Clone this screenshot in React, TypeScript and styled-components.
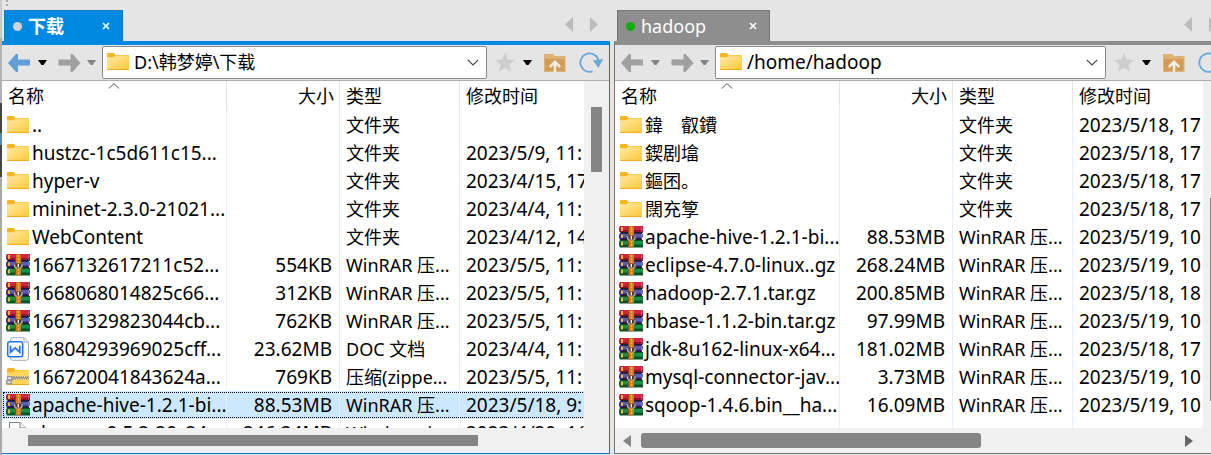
import React from "react";
import styled, { createGlobalStyle } from "styled-components";

const FONT = '"Noto Sans", "Noto Sans CJK SC", sans-serif';

const GlobalStyle = createGlobalStyle`
  *, *::before, *::after { box-sizing: border-box; }
  body { margin: 0; background: #e5e5e5; overflow: hidden; }
  button, input, table { font: inherit; color: inherit; }
  svg { display: block; flex: none; }
`;

const Workspace = styled.main`
  display: grid;
  grid-template-columns: minmax(0, 608fr) minmax(0, 615fr);
  gap: 4px;
  height: 100vh;
  margin-right: -18px;
  padding-bottom: 1px;
  border-left: 2px solid;
  border-image: linear-gradient(
      #c9c9c9 0 40px, #b2b2b2 40px 104px, #454545 104px 134px, #5f86b5 134px 146px,
      #454545 146px 177px, #a9a9a9 177px 100%) 2;
  font: 18px/28px ${FONT};
  color: #000;
`;

const Pane = styled.section`
  display: flex;
  flex-direction: column;
  min-height: 0;
`;

const TabBar = styled.div<{ $grip: boolean }>`
  display: flex;
  align-items: flex-end;
  height: 41px;
  flex: none;
  padding: 0 12px 0 ${(p) => (p.$grip ? 2 : 3)}px;
  background: ${(p) =>
    p.$grip
      ? "linear-gradient(#a8a8a8, #a8a8a8) 4px 0 / 2px 2px no-repeat, linear-gradient(#a8a8a8, #a8a8a8) 4px 4px / 2px 2px no-repeat"
      : "none"};
`;

const Tab = styled.div<{ $fill: string; $edge: string; $wide: boolean }>`
  display: flex;
  align-items: center;
  width: ${(p) => (p.$wide ? 153 : 119)}px;
  height: 31px;
  padding: 0 12px 0 8px;
  background: ${(p) => p.$fill};
  border: 1px solid ${(p) => p.$edge};
  border-bottom: 0;
  color: #fff;
`;

const TabLabel = styled.button<{ $bold: boolean }>`
  display: flex;
  align-items: center;
  gap: 6px;
  flex: 1;
  height: 100%;
  padding: 0;
  border: 0;
  background: none;
  font-weight: ${(p) => (p.$bold ? 700 : 400)};
  line-height: 28px;
`;

const StatusDot = styled.span<{ $color: string }>`
  width: 9px;
  height: 9px;
  border-radius: 50%;
  background: ${(p) => p.$color};
`;

const PlainButton = styled.button`
  display: flex;
  align-items: center;
  justify-content: center;
  flex: none;
  padding: 0;
  border: 0;
  background: none;
`;

const TabScroller = styled.div`
  display: flex;
  gap: 17px;
  margin: 0 0 9px auto;
`;

const Body = styled.div<{ $accent: string; $leftEdge: boolean; $edge: string }>`
  display: flex;
  flex-direction: column;
  flex: 1;
  min-height: 0;
  border: 1px solid ${(p) => p.$edge};
  border-top: 4px solid ${(p) => p.$accent};
  border-left-width: ${(p) => (p.$leftEdge ? 1 : 0)}px;
`;

const Toolbar = styled.div`
  display: flex;
  align-items: center;
  height: 36px;
  flex: none;
  padding: 0 6px;
  border-bottom: 1px solid #adadad;
`;

const ToolGroup = styled.div<{ $gap: number; $after: number }>`
  display: flex;
  align-items: center;
  gap: ${(p) => p.$gap}px;
  margin-right: ${(p) => p.$after}px;
`;

const PathBox = styled.label`
  display: flex;
  align-items: center;
  flex: 1;
  min-width: 0;
  height: 33px;
  margin-right: 8px;
  padding: 0 7px 1px 3px;
  gap: 4px;
  background: #fff;
  border: 1px solid #8a8a8a;
  border-radius: 2px;
`;

const PathInput = styled.input<{ $large: boolean }>`
  flex: 1;
  min-width: 0;
  height: 28px;
  padding: 0;
  border: 0;
  outline: 0;
  background: none;
  font-size: ${(p) => (p.$large ? 19 : 18)}px;
`;

const ListArea = styled.div`
  display: flex;
  flex: 1;
  min-height: 0;
  background: #f0f0f0;
`;

const ListView = styled.div`
  flex: 1;
  min-width: 0;
  overflow: hidden;
  background: #fff;
  border-bottom-right-radius: 3px;
`;

const FileTable = styled.table`
  width: 660px;
  height: 100%;
  table-layout: fixed;
  border-collapse: separate;
  border-spacing: 0;
  white-space: nowrap;
`;

const HeadCell = styled.th<{ $align?: string }>`
  position: relative;
  height: 30px;
  padding: 1px 5px 1px 6px;
  border-right: 1px solid #e5e5e5;
  font-weight: 400;
  text-align: ${(p) => p.$align || "left"};
`;

const SortMark = styled.svg`
  position: absolute;
  top: 2px;
  left: 50%;
  margin-left: -6px;
`;

const Row = styled.tr<{ $selected?: boolean }>`
  height: 28px;
  background: ${(p) => (p.$selected ? "#cce8ff" : "transparent")};
  outline: ${(p) => (p.$selected ? "1px dotted #000" : "none")};
  outline-offset: -2px;
`;

const Cell = styled.td<{ $align?: string; $large?: boolean }>`
  height: 28px;
  padding: 0 7px 0 6px;
  border-right: 1px solid #e6f1fc;
  overflow: hidden;
  font-size: ${(p) => (p.$large ? 19 : 18)}px;
  text-align: ${(p) => p.$align || "left"};
`;

const NameCell = styled(Cell)`
  padding: 0 0 0 4px;
`;

const FillerCell = styled(Cell)`
  height: auto;
`;

const FileName = styled.span`
  display: flex;
  align-items: center;
  gap: 2px;
  height: 28px;
`;

const VTrack = styled.div`
  width: 25px;
  flex: none;
  padding-left: 7px;
  background: #f0f0f0;
`;

const VThumb = styled.div<{ $top: number; $size: number }>`
  width: 11px;
  height: ${(p) => p.$size}px;
  transform: translateY(${(p) => p.$top}px);
  background: #858585;
`;

const HTrack = styled.div<{ $arrows: boolean }>`
  display: flex;
  align-items: center;
  height: 25px;
  flex: none;
  padding: 0 ${(p) => (p.$arrows ? "35px 0 8px" : "0 0 26px")};
  background: #f0f0f0;
`;

const HThumb = styled.div<{ $size: number; $arrows: boolean }>`
  width: ${(p) => p.$size}px;
  height: ${(p) => (p.$arrows ? 15 : 11)}px;
  margin: 0 auto 0 ${(p) => (p.$arrows ? 10 : 0)}px;
  border-radius: ${(p) => (p.$arrows ? 3 : 0)}px;
  background: #858585;
`;

const FolderIcon = () => (
  <svg width="24" height="22" viewBox="0 0 24 22" aria-hidden="true">
    <defs>
      <linearGradient id="folderFront" x1="0" y1="0" x2="1" y2="1">
        <stop offset="0" stopColor="#ffe9a6" />
        <stop offset="1" stopColor="#ffc938" />
      </linearGradient>
    </defs>
    <path d="M1 3.2Q1 2 2.2 2H7.6L9.6 4H22q1 0 1 1V9H1z" fill="#f8b51b" />
    <path d="M1 6.2H7.6L9.6 4.6H23V17.8q0 1.2-1.2 1.2H2.2Q1 19 1 17.8z" fill="url(#folderFront)" />
    <path d="M1.2 18.4H22.8" stroke="#eba71b" strokeWidth="1" />
  </svg>
);

const RarIcon = () => (
  <svg width="24" height="22" viewBox="0 0 24 22" aria-hidden="true">
    <path d="M1 0H24V7H2Q0 6 0 3.5T1 0z" fill="#8d1230" />
    <path d="M2 0H24V4H1Q1 1 2 0z" fill="#cf2443" />
    <path d="M1 7H23V14H1Q0 12 0 10.5T1 7z" fill="#28236e" />
    <path d="M2 8H24V11.5H1z" fill="#5a5cb0" />
    <path d="M1 14H24V21.5H1Q0 20 0 17.5T1 14z" fill="#075329" />
    <path d="M2 15H24V18.5H1z" fill="#18904a" />
    <path d="M2 6.5H23M2 13.5H23" stroke="#241b2b" strokeWidth="1" />
    <path d="M3 1V5M3 8.5V12M3 15.5V19.5" stroke="#efb33d" strokeWidth="2" />
    <path d="M22.5 1V6M22.5 8V13" stroke="#fff" strokeOpacity=".2" />
    <path d="M9 1Q12 -1 15 1V20.5Q12 22.5 9 20.5z" fill="#d07c1c" />
    <path d="M9.5 1V20.5" stroke="#8c4a0c" />
    <path d="M12.5 1V9M12.5 15V20" stroke="#f6b046" strokeWidth="1.4" strokeDasharray="2 1" />
    <path d="M9 9.5H15.5V14H9z" fill="#5a3b28" />
    <path d="M8.6 13.5V10.5M15.9 13.5V10.5M9 13.8H10.8M13.8 13.8H15.5" fill="none" stroke="#cfc8bd" strokeWidth="1.2" />
    <path d="M12.3 10V13.4" stroke="#f4efe6" strokeWidth="1.4" />
  </svg>
);

const DocIcon = () => (
  <svg width="24" height="24" viewBox="0 0 24 24" fill="none" aria-hidden="true">
    <path d="M4.5 4V3Q4.5 .7 6.8 .7H18L22.5 5.2V21Q22.5 23.3 20.2 23.3H6.8Q4.5 23.3 4.5 21z" fill="#fff" stroke="#a3adba" />
    <path d="M18 .7V5.2H22.5" stroke="#a3adba" />
    <rect x="1.7" y="4.7" width="15" height="15" rx="2.2" fill="#fff" stroke="#1b72f2" strokeWidth="1.5" />
    <path d="M4.5 8.8V15.2L9.2 10.8L13.8 15.2V8.8" stroke="#1b72f2" strokeWidth="1.7" />
  </svg>
);

const ZipIcon = () => (
  <svg width="24" height="22" viewBox="0 0 24 22" aria-hidden="true">
    <path d="M1 3.2Q1 2 2.2 2H7.6L9.6 4H22q1 0 1 1V9H1z" fill="#f8b51b" />
    <path d="M1 6.2H7.6L9.6 4.6H23V17.8q0 1.2-1.2 1.2H1z" fill="#ffd65c" />
    <path d="M1 18.5H23" stroke="#eba71b" />
    <path d="M8 11.8H23" stroke="#ead9a0" strokeWidth="4" />
    <path d="M8 11.2H23" stroke="#665f50" strokeWidth="1.6" strokeDasharray="1.2 1" />
    <path d="M9 12.8H23" stroke="#8a8069" strokeWidth="1.4" strokeDasharray="1.2 1" />
    <path d="M1 10H6L8.5 11V13.5L6 14.5V18.5H0V14H1z" fill="#9a9a9a" />
    <path d="M2 11.5H5V13H2zM1.5 15.5H4.5V17H1.5z" fill="#f2f2f2" />
  </svg>
);

const PageIcon = () => (
  <svg width="24" height="24" viewBox="0 0 24 24" fill="#fff" stroke="#7d7d7d" aria-hidden="true">
    <path d="M3.5 1.5H14L19.5 7V23H3.5z" />
    <path d="M14 1.5V7H19.5" />
  </svg>
);

const icons = { folder: FolderIcon, rar: RarIcon, doc: DocIcon, zip: ZipIcon, page: PageIcon };

const ArrowIcon = ({ forward, color }: { forward?: boolean; color: string }) => (
  <svg width={forward ? 23 : 22} height="18" viewBox="0 0 22 18" fill={color} aria-hidden="true">
    <path d={forward ? "M22 9L14 0H12V5.5H0V11.5H12V18H14z" : "M0 9L8 0H10V5.5H22V11.5H10V18H8z"} />
  </svg>
);

const DropIcon = ({ color = "#000" }: { color?: string }) => (
  <svg width="9" height="5" viewBox="0 0 9 5" fill={color} aria-hidden="true">
    <path d="M0 0H9L5.5 5H3.5z" />
  </svg>
);

const StarIcon = () => (
  <svg width="20" height="19" viewBox="0 0 20 19" fill="#cdcdcd" aria-hidden="true">
    <path d="M10 0L12.7 6.5L20 7L14.4 11.5L16.2 18.5L10 14.8L3.8 18.5L5.6 11.5L0 7L7.3 6.5z" />
  </svg>
);

const UpFolderIcon = () => (
  <svg width="22" height="20" viewBox="0 0 22 20" aria-hidden="true">
    <path d="M0 1H9L11 3H21.5V19H0z" fill="#deb277" />
    <path d="M1 6H20.5V18H1z" fill="#d29b58" />
    <path d="M11 7L17 13L15.5 15L12.3 12V19.5H9.7V12L6.5 15L5 13z" fill="#f5ede3" />
  </svg>
);

const RefreshIcon = () => (
  <svg width="24" height="21" viewBox="0 0 24 21" aria-hidden="true">
    <path d="M13.5 19.3A9.2 9.2 0 1 1 19.6 9" fill="none" stroke="#6ba6dc" strokeWidth="1.8" />
    <path d="M14 8.5L24 7L19.5 16z" fill="#6ba6dc" />
  </svg>
);

const NavTriangle = ({ forward, color = "#bcbcbc", height = 15 }: { forward?: boolean; color?: string; height?: number }) => (
  <svg width="8" height={height} viewBox="0 0 8 15" preserveAspectRatio="none" fill={color} aria-hidden="true">
    <path d={forward ? "M0 0L8 7.5L0 15z" : "M8 0L0 7.5L8 15z"} />
  </svg>
);

type FileRow = {
  icon: keyof typeof icons;
  name: string;
  size?: string;
  type: string;
  time?: string;
  selected?: boolean;
};

const RAR = "WinRAR 压...";
const DIR = "文件夹";

// Latin text is set one pixel larger than Chinese text so the two look even.
const isLatin = (text: string) => /^[\x20-\x7e]*$/.test(text);

const localFiles: FileRow[] = [
  { icon: "folder", name: "..", type: DIR },
  { icon: "folder", name: "hustzc-1c5d611c15...", type: DIR, time: "2023/5/9, 11:" },
  { icon: "folder", name: "hyper-v", type: DIR, time: "2023/4/15, 17" },
  { icon: "folder", name: "mininet-2.3.0-21021...", type: DIR, time: "2023/4/4, 11:" },
  { icon: "folder", name: "WebContent", type: DIR, time: "2023/4/12, 14" },
  { icon: "rar", name: "1667132617211c52...", size: "554KB", type: RAR, time: "2023/5/5, 11:" },
  { icon: "rar", name: "1668068014825c66...", size: "312KB", type: RAR, time: "2023/5/5, 11:" },
  { icon: "rar", name: "16671329823044cb...", size: "762KB", type: RAR, time: "2023/5/5, 11:" },
  { icon: "doc", name: "16804293969025cff...", size: "23.62MB", type: "DOC 文档", time: "2023/4/4, 11:" },
  { icon: "zip", name: "166720041843624a...", size: "769KB", type: "压缩(zippe...", time: "2023/5/5, 11:" },
  { icon: "rar", name: "apache-hive-1.2.1-bi...", size: "88.53MB", type: RAR, time: "2023/5/18, 9:", selected: true },
  { icon: "page", name: "chrome-0.5.2-20_24...", size: "246.24MB", type: "Windows i...", time: "2023/4/20, 11" },
];

const remoteFiles: FileRow[] = [
  { icon: "folder", name: "鍏　叡鐨", type: DIR, time: "2023/5/18, 17" },
  { icon: "folder", name: "鍥剧墖", type: DIR, time: "2023/5/18, 17" },
  { icon: "folder", name: "鏂囨。", type: DIR, time: "2023/5/18, 17" },
  { icon: "folder", name: "闊充箰", type: DIR, time: "2023/5/18, 17" },
  { icon: "rar", name: "apache-hive-1.2.1-bi...", size: "88.53MB", type: RAR, time: "2023/5/19, 10" },
  { icon: "rar", name: "eclipse-4.7.0-linux..gz", size: "268.24MB", type: RAR, time: "2023/5/19, 10" },
  { icon: "rar", name: "hadoop-2.7.1.tar.gz", size: "200.85MB", type: RAR, time: "2023/5/18, 18" },
  { icon: "rar", name: "hbase-1.1.2-bin.tar.gz", size: "97.99MB", type: RAR, time: "2023/5/19, 10" },
  { icon: "rar", name: "jdk-8u162-linux-x64...", size: "181.02MB", type: RAR, time: "2023/5/18, 17" },
  { icon: "rar", name: "mysql-connector-jav...", size: "3.73MB", type: RAR, time: "2023/5/19, 10" },
  { icon: "rar", name: "sqoop-1.4.6.bin__ha...", size: "16.09MB", type: RAR, time: "2023/5/19, 10" },
];

type PaneProps = {
  title: string;
  path: string;
  files: FileRow[];
  active?: boolean;
  vThumb: [number, number];
  hThumb: number;
};

function FilePane({ title, path, files, active = false, vThumb, hThumb }: PaneProps) {
  const accent = active ? "#0089e3" : "#8e8e8e";
  const edge = active ? "#0b7bc8" : "#757575";
  return (
    <Pane aria-label={title}>
      <TabBar $grip={active}>
        <Tab $fill={accent} $edge={edge} $wide={!active}>
          <TabLabel $bold={active}>
            <StatusDot $color={active ? "#d2d2d2" : "#0fae0f"} />
            {title}
          </TabLabel>
          <PlainButton aria-label="关闭">
            <svg width="8" height="8" viewBox="0 0 8 8" stroke="#fff" strokeWidth="1.6">
              <path d="M1 1L7 7M7 1L1 7" />
            </svg>
          </PlainButton>
        </Tab>
        <TabScroller>
          <PlainButton aria-label="上一个"><NavTriangle /></PlainButton>
          <PlainButton aria-label="下一个"><NavTriangle forward /></PlainButton>
        </TabScroller>
      </TabBar>
      <Body $accent={accent} $edge={edge} $leftEdge={!active}>
        <Toolbar>
          <ToolGroup $gap={8} $after={11}>
            <PlainButton aria-label="后退"><ArrowIcon color={active ? "#619fd6" : "#a0a0a0"} /></PlainButton>
            <PlainButton aria-label="后退历史"><DropIcon color={active ? "#000" : "#858585"} /></PlainButton>
          </ToolGroup>
          <ToolGroup $gap={6} $after={6}>
            <PlainButton aria-label="前进"><ArrowIcon forward color="#a0a0a0" /></PlainButton>
            <PlainButton aria-label="前进历史"><DropIcon color="#858585" /></PlainButton>
          </ToolGroup>
          <PathBox>
            <FolderIcon />
            <PathInput aria-label="路径" defaultValue={path} $large={isLatin(path)} />
            <PlainButton aria-label="路径列表">
              <svg width="12" height="7" viewBox="0 0 12 7" fill="none" stroke="#444" strokeWidth="1.2">
                <path d="M.8 .8L6 6L11.2 .8" />
              </svg>
            </PlainButton>
          </PathBox>
          <ToolGroup $gap={8} $after={12}>
            <PlainButton aria-label="收藏"><StarIcon /></PlainButton>
            <PlainButton aria-label="收藏列表"><DropIcon /></PlainButton>
          </ToolGroup>
          <ToolGroup $gap={13} $after={0}>
            <PlainButton aria-label="上级目录"><UpFolderIcon /></PlainButton>
            <PlainButton aria-label="刷新"><RefreshIcon /></PlainButton>
          </ToolGroup>
        </Toolbar>
        <ListArea>
          <ListView>
            <FileTable>
              <colgroup>
                <col width="225" />
                <col width="113" />
                <col width="120" />
                <col />
              </colgroup>
              <thead>
                <tr>
                  <HeadCell>
                    名称
                    <SortMark width="12" height="6" viewBox="0 0 12 6" fill="none" stroke="#555">
                      <path d="M.7 5.5L6 .7L11.3 5.5" />
                    </SortMark>
                  </HeadCell>
                  <HeadCell $align="right">大小</HeadCell>
                  <HeadCell>类型</HeadCell>
                  <HeadCell>修改时间</HeadCell>
                </tr>
              </thead>
              <tbody>
                {files.map((f) => {
                  const Icon = icons[f.icon];
                  return (
                    <Row key={f.name} $selected={f.selected}>
                      <NameCell $large={isLatin(f.name)}>
                        <FileName><Icon />{f.name}</FileName>
                      </NameCell>
                      <Cell $align="right" $large>{f.size}</Cell>
                      <Cell>{f.type}</Cell>
                      <Cell $large>{f.time}</Cell>
                    </Row>
                  );
                })}
                <tr><FillerCell /><FillerCell /><FillerCell /><FillerCell /></tr>
              </tbody>
            </FileTable>
          </ListView>
          <VTrack><VThumb $top={vThumb[0]} $size={vThumb[1]} /></VTrack>
        </ListArea>
        <HTrack $arrows={!active}>
          {!active && <NavTriangle color="#858585" height={12} />}
          <HThumb $size={hThumb} $arrows={!active} />
          {!active && <NavTriangle forward color="#666" height={12} />}
        </HTrack>
      </Body>
    </Pane>
  );
}

export default function App() {
  return (
    <>
      <GlobalStyle />
      <Workspace>
        <FilePane active title="下载" path="D:\韩梦婷\下载" files={localFiles} vThumb={[26, 65]} hThumb={450} />
        <FilePane title="hadoop" path="/home/hadoop" files={remoteFiles} vThumb={[117, 203]} hThumb={340} />
      </Workspace>
    </>
  );
}
